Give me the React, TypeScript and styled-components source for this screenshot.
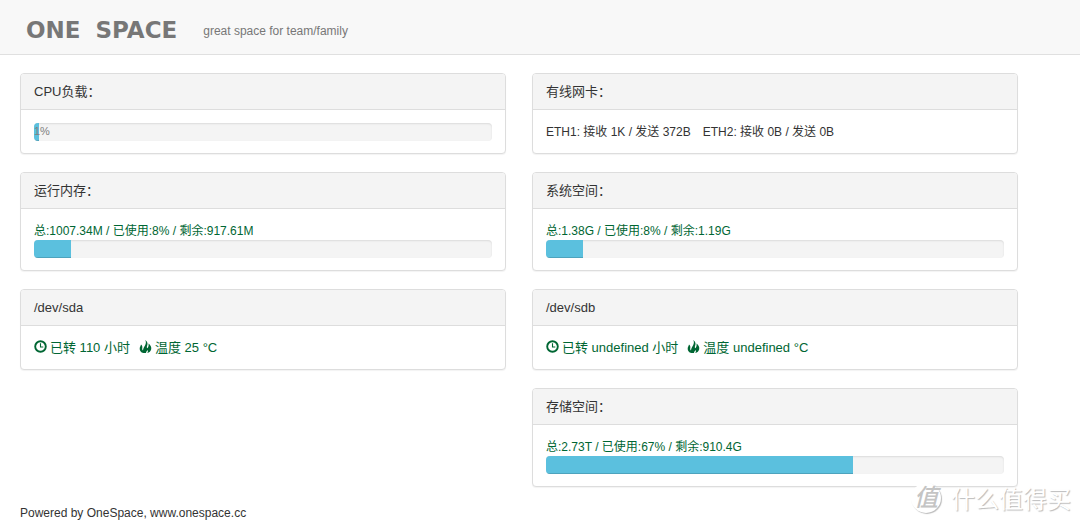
import React from "react";
import styled, { createGlobalStyle } from "styled-components";

const GlobalStyle = createGlobalStyle`
  *, *::before, *::after { box-sizing: border-box; }
  body {
    margin: 0;
    background: #fff;
    color: #333;
    font: 12px/18px "Liberation Sans", "Noto Sans CJK SC", sans-serif;
  }
`;

const Page = styled.div`
  position: relative;
`;

const Header = styled.header`
  display: flex;
  align-items: center;
  gap: 26px;
  padding: 21px 26px 15px;
  background: #f8f8f8;
  border-bottom: 1px solid #e0e0e0;
`;

const Brand = styled.h1`
  display: flex;
  gap: 15px;
  margin: 0;
  color: #777;
  font: bold 23px/18px "DejaVu Sans", sans-serif;
`;

const Tagline = styled.p`
  margin: 0;
  padding-top: 2px;
  line-height: 12px;
  color: #777;
`;

const Columns = styled.main`
  display: grid;
  grid-template-columns: 1fr 1fr;
  gap: 26px;
  padding: 18px 62px 0 20px;
`;

const Column = styled.div`
  display: flex;
  flex-direction: column;
  gap: 18px;
`;

const PanelBox = styled.section`
  border: 1px solid #ddd;
  border-radius: 4px;
  background: #fff;
  box-shadow: 0 1px 1px rgba(0, 0, 0, 0.05);
`;

const PanelTitle = styled.h2`
  margin: 0;
  padding: 9px 13px 8px;
  border-bottom: 1px solid #ddd;
  border-radius: 3px 3px 0 0;
  background: #f4f4f4;
  font-size: 13px;
  font-weight: normal;
`;

const PanelBody = styled.div`
  padding: 13px 13px 12px;
`;

const Line = styled.p<{ $green?: boolean }>`
  display: flex;
  flex-wrap: wrap;
  column-gap: 12px;
  margin: 0;
  color: ${(p) => (p.$green ? "#006633" : "#333")};
`;

const IconText = styled.span`
  display: inline-flex;
  align-items: center;
  gap: 3px;
  font-size: 13px;
`;

const DiskLine = styled(Line)`
  column-gap: 9px;
`;

const Icon = styled.svg`
  flex: none;
  width: 13px;
  height: 13px;
  margin-bottom: 3px;
  fill: currentColor;
`;

const Track = styled.div`
  height: 18px;
  overflow: hidden;
  border-radius: 4px;
  background: #f4f4f4;
  box-shadow: inset 0 1px 2px rgba(0, 0, 0, 0.1);
`;

const Fill = styled.div`
  height: 100%;
  background: #5bc0de;
  box-shadow: inset 0 -1px 0 rgba(0, 0, 0, 0.15);
  color: #808080;
  font-size: 11px;
  line-height: 17px;
  white-space: nowrap;
`;

const Footer = styled.footer`
  padding: 17px 20px 3px;
`;

const Watermark = styled.div`
  position: absolute;
  right: 9px;
  bottom: 11px;
  display: flex;
  align-items: center;
  gap: 10px;
  color: #fff;
  font: 24px/32px "Noto Sans CJK SC", sans-serif;
  text-shadow: 1px 1px 1px #bbb;
`;

const Seal = styled.span`
  width: 30px;
  height: 30px;
  border-radius: 50%;
  background: #fff;
  box-shadow: 1px 1px 1px #bbb;
  color: #c4c4c4;
  font-size: 24px;
  font-style: italic;
  font-weight: 500;
  line-height: 26px;
  text-align: center;
  text-shadow: none;
`;

function ClockIcon() {
  return (
    <Icon viewBox="0 0 13 13" aria-hidden="true">
      <circle cx="6.5" cy="6.5" r="5.3" fill="none" stroke="currentColor" strokeWidth="1.9" />
      <path d="M6.5 3.2V7H9.3" fill="none" stroke="currentColor" strokeWidth="1.1" />
    </Icon>
  );
}

function FlameIcon() {
  return (
    <Icon viewBox="0 0 13 13" aria-hidden="true">
      <path d="M6.2 0C8.6 1.8 8.9 3.6 8.2 5.4C7.8 6.6 7.7 7.4 8.2 8.3C9.4 7.2 9.9 5.4 9.5 3.4C11.6 4.8 12.7 7.2 12.2 9.3C11.8 11.2 10.4 12.5 8.2 13C9 11.8 9.1 10.9 8.7 10C8 10.9 7.2 11.6 7 13H4.4C1.8 12.3 0.5 10.5 0.7 8.4C0.8 7 1.7 6 2 4.6C3.3 5.6 3.6 7 3.2 8.5C3.1 9.4 3.4 10 4 10.5C4.1 8.6 4.9 7.3 6 5.4C7.1 3.6 7.2 1.8 6.2 0Z" />
    </Icon>
  );
}

function Panel({ title, children }: { title: string; children: React.ReactNode }) {
  return (
    <PanelBox>
      <PanelTitle>{title}</PanelTitle>
      <PanelBody>{children}</PanelBody>
    </PanelBox>
  );
}

function Progress({ label, value, children }: { label: string; value: number; children?: React.ReactNode }) {
  return (
    <Track role="progressbar" aria-label={label} aria-valuenow={value} aria-valuemin={0} aria-valuemax={100}>
      <Fill style={{ width: `${value}%` }}>{children}</Fill>
    </Track>
  );
}

function Usage({ title, total, used, free }: { title: string; total: string; used: number; free: string }) {
  return (
    <Panel title={`${title}：`}>
      <Line $green>{`总:${total} / 已使用:${used}% / 剩余:${free}`}</Line>
      <Progress label={title} value={used} />
    </Panel>
  );
}

function Disk({ name, hours, temperature }: { name: string; hours: string; temperature: string }) {
  return (
    <Panel title={name}>
      <DiskLine $green>
        <IconText>
          <ClockIcon />
          {`已转 ${hours} 小时`}
        </IconText>
        <IconText>
          <FlameIcon />
          {`温度 ${temperature} °C`}
        </IconText>
      </DiskLine>
    </Panel>
  );
}

export default function App() {
  return (
    <Page>
      <GlobalStyle />
      <Header>
        <Brand>
          <span>ONE</span>
          <span>SPACE</span>
        </Brand>
        <Tagline>great space for team/family</Tagline>
      </Header>
      <Columns>
        <Column>
          <Panel title="CPU负载：">
            <Progress label="CPU负载" value={1}>1%</Progress>
          </Panel>
          <Usage title="运行内存" total="1007.34M" used={8} free="917.61M" />
          <Disk name="/dev/sda" hours="110" temperature="25" />
        </Column>
        <Column>
          <Panel title="有线网卡：">
            <Line>
              <span>ETH1: 接收 1K / 发送 372B</span>
              <span>ETH2: 接收 0B / 发送 0B</span>
            </Line>
          </Panel>
          <Usage title="系统空间" total="1.38G" used={8} free="1.19G" />
          <Disk name="/dev/sdb" hours="undefined" temperature="undefined" />
          <Usage title="存储空间" total="2.73T" used={67} free="910.4G" />
        </Column>
      </Columns>
      <Footer>Powered by OneSpace, www.onespace.cc</Footer>
      <Watermark>
        <Seal>值</Seal>
        <span>什么值得买</span>
      </Watermark>
    </Page>
  );
}
